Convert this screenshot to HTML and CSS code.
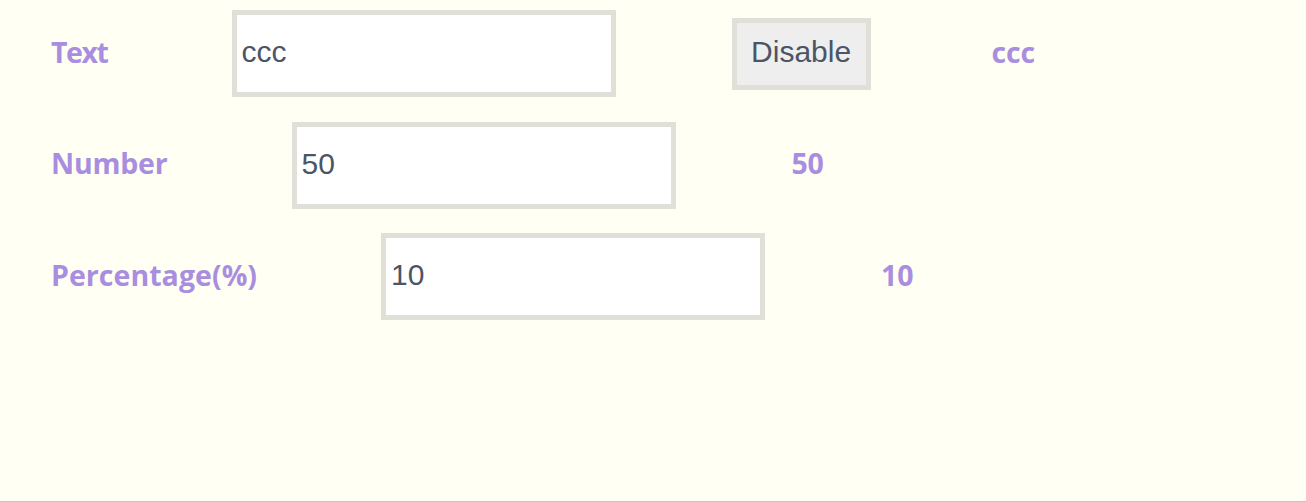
FILE: index.html
```html
<!DOCTYPE html>
<html>
<head>
<meta charset="utf-8">
<link rel="stylesheet" href="styles.css">
</head>
<body>
<div class="page">
  <div class="row">
    <label class="label label-tight">Text</label>
    <input class="field" type="text" value="ccc">
    <button class="btn">Disable</button>
    <span class="value">ccc</span>
  </div>
  <div class="row">
    <label class="label">Number</label>
    <input class="field" type="text" value="50">
    <span class="value">50</span>
  </div>
  <div class="row">
    <label class="label label-wide">Percentage(%)</label>
    <input class="field" type="text" value="10">
    <span class="value">10</span>
  </div>
</div>
</body>
</html>
```

FILE: styles.css
```css
html, body {
  margin: 0;
  padding: 0;
  background: #fffff3;
}
.page {
  box-sizing: border-box;
  height: 502px;
  border-bottom: 1px solid #c4c4c0;
  padding: 10px 0 0 51px;
  display: flex;
  flex-direction: column;
  gap: 24.5px;
}
.row {
  display: flex;
  align-items: center;
  height: 87px;
}
.label, .value {
  font-family: "Open Sans", "Noto Sans", sans-serif;
  font-weight: bold;
  font-size: 28.5px;
  line-height: 1;
  color: #a98ee0;
  letter-spacing: -0.2px;
  margin-top: -3px;
}
.label {
  margin-right: 124px;
}
.label-tight {
  letter-spacing: -1.4px;
}
.label-wide {
  letter-spacing: 0.05px;
}
.field {
  box-sizing: border-box;
  width: 384px;
  height: 87px;
  border: 5px solid #e0e0d8;
  background: #ffffff;
  padding: 0 5px 3px;
  font-family: "Liberation Sans", Arial, sans-serif;
  font-size: 30px;
  color: #4b5566;
  outline: none;
  margin: 0 116px 0 0;
}
.btn {
  box-sizing: border-box;
  width: 139px;
  height: 72px;
  border: 5px solid #e0e0d8;
  background: #eeeeee;
  font-family: "Liberation Sans", Arial, sans-serif;
  font-size: 30px;
  color: #4b5566;
  padding: 0 0 3px;
  margin-right: 121px;
}
```
